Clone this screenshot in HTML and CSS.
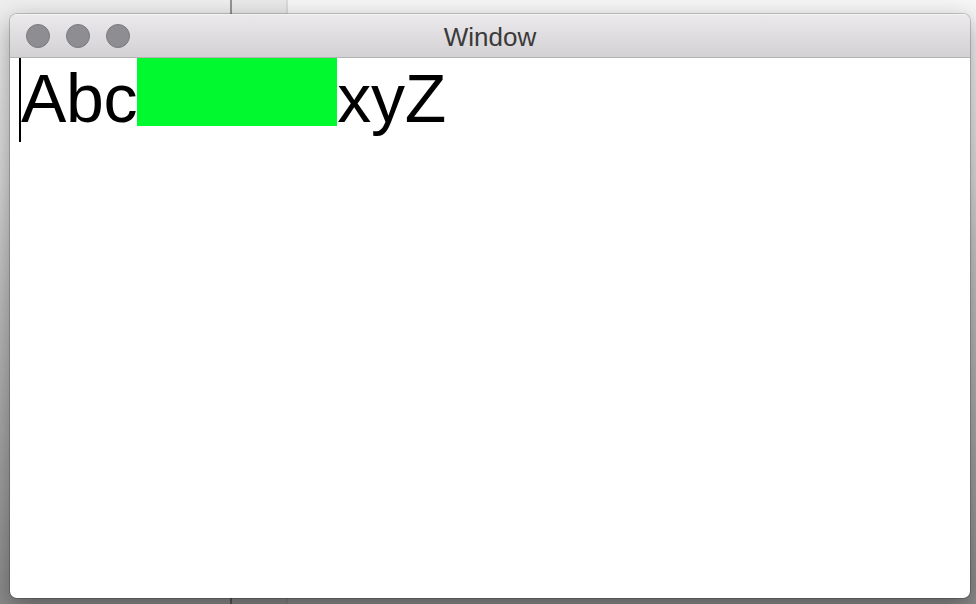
FILE: index.html
```html
<!DOCTYPE html>
<html>
<head>
<meta charset="utf-8">
<link rel="stylesheet" href="styles.css">
</head>
<body>
<div class="desktop">
  <div class="pane pane-left"></div>
  <div class="divider divider-dark"></div>
  <div class="pane pane-mid"></div>
  <div class="divider divider-light"></div>
  <div class="pane pane-right"></div>
</div>
<div class="window">
  <div class="titlebar">
    <div class="lights">
      <span class="light"></span>
      <span class="light"></span>
      <span class="light"></span>
    </div>
    <div class="title">Window</div>
  </div>
  <div class="content">
    <div class="line"><span class="caret"></span><span class="txt">Abc</span><span class="block"></span><span class="txt">xyZ</span></div>
  </div>
</div>
</body>
</html>
```

FILE: styles.css
```css
html, body {
  margin: 0;
  padding: 0;
  width: 976px;
  height: 604px;
  overflow: hidden;
}
body {
  position: relative;
  font-family: "Liberation Sans", Arial, sans-serif;
}
.desktop {
  display: flex;
  width: 976px;
  height: 604px;
  background: linear-gradient(to bottom, #eeeeee 0%, #d6d6d6 30%, #bdbdbd 50%, #a2a2a2 75%, #8a8a8a 100%);
}
.pane { height: 100%; }
.pane-left { width: 230px; }
.pane-mid { width: 54px; background: rgba(0,0,0,0.02); }
.pane-right { flex: 1; background: linear-gradient(to bottom, rgba(255,255,255,0.45), rgba(255,255,255,0) 40%); }
.divider { height: 100%; }
.divider-dark { width: 2px; background: rgba(0,0,0,0.38); }
.divider-light { width: 2px; background: rgba(0,0,0,0.08); }

.window {
  position: absolute;
  left: 10px;
  top: 14px;
  width: 960px;
  height: 584px;
  border-radius: 7px;
  background: #ffffff;
  box-shadow: 0 0 0 1px rgba(0,0,0,0.18), 0 8px 24px rgba(0,0,0,0.35);
  display: flex;
  flex-direction: column;
  overflow: hidden;
}
.titlebar {
  position: relative;
  height: 43px;
  flex: none;
  display: flex;
  align-items: center;
  justify-content: center;
  background: linear-gradient(to bottom, #ebe9eb, #d3d1d3);
  border-bottom: 1px solid #b3b3b3;
  border-top: 1px solid #f4f4f4;
  box-sizing: border-box;
  height: 44px;
}
.lights {
  position: absolute;
  left: 16px;
  top: 9px;
  display: flex;
  gap: 16px;
}
.light {
  width: 22px;
  height: 22px;
  border-radius: 50%;
  background: #8e8d92;
  border: 1px solid #7b7a7f;
}
.title {
  font-size: 26px;
  color: #3a3a3a;
  line-height: 30px;
  margin-top: 1px;
}
.content {
  flex: 1;
  padding-left: 9px;
}
.line {
  display: flex;
  align-items: flex-start;
  height: 84px;
}
.caret {
  width: 2px;
  height: 84px;
  background: #000;
  flex: none;
}
.txt {
  font-size: 68px;
  line-height: 68px;
  color: #000;
  margin-top: 6px;
  letter-spacing: -0.3px;
}
.block {
  width: 200px;
  height: 68px;
  background: #00f92f;
  flex: none;
}
```
